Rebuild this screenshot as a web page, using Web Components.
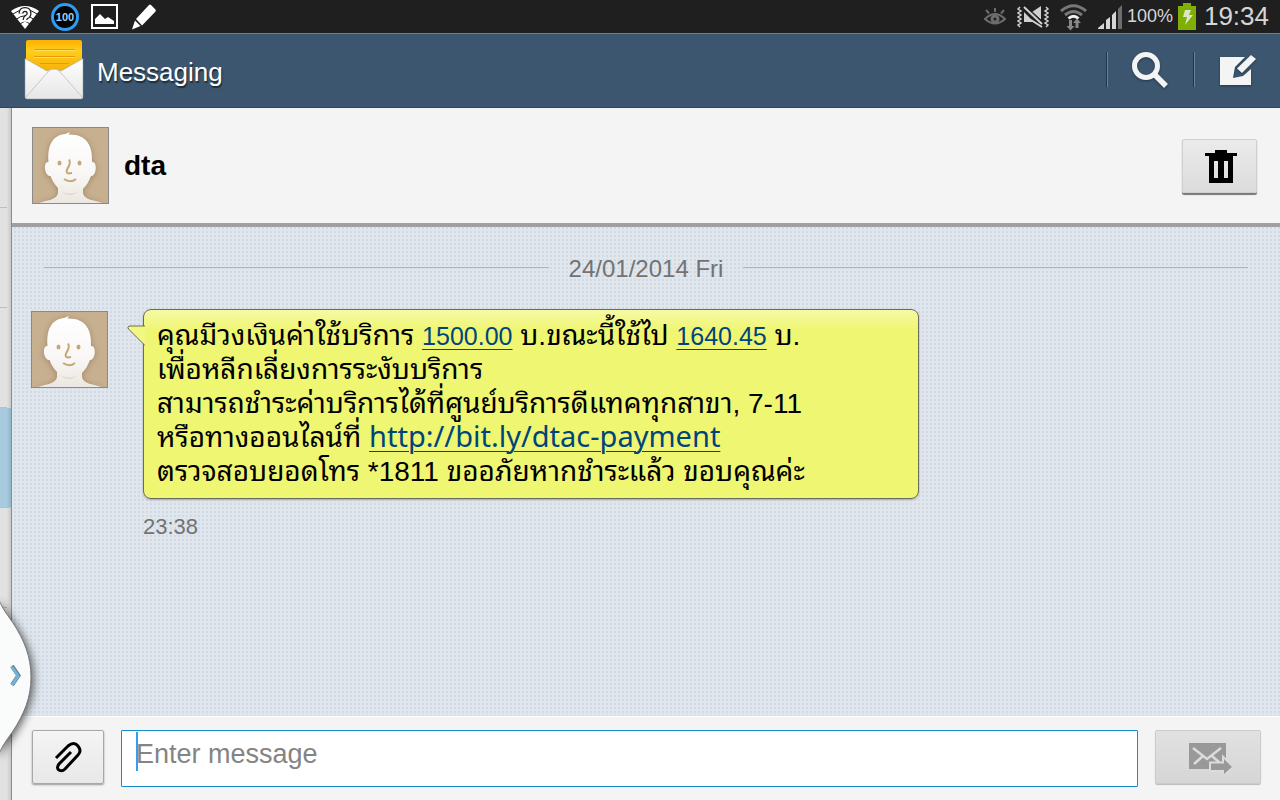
<!DOCTYPE html>
<html lang="th">
<head>
<meta charset="utf-8">
<meta name="viewport" content="width=device-width, initial-scale=1">
<title>Messaging</title>
<style>
    html, body { height: 100%; margin: 0; }
    body {
        display: flex;
        flex-direction: column;
        overflow: hidden;
        background: #f4f4f4;
        color: #000;
        font-family: "Liberation Sans", "Droid Sans Thai", "Noto Sans Thai Looped", Loma, Waree, "Noto Sans Thai", "Noto Sans", sans-serif;
    }
    main {
        position: relative;
        flex: 1;
        display: flex;
        min-height: 0;
    }
    .pane {
        flex: 1;
        display: flex;
        flex-direction: column;
        min-width: 0;
    }
</style>
</head>
<body>
<status-bar time="19:34" battery="100%" badge="100"></status-bar>
<action-bar>Messaging</action-bar>
<main>
    <thread-rail></thread-rail>
    <div class="pane">
        <contact-header>dta</contact-header>
        <message-list>
            <date-divider>24/01/2014 Fri</date-divider>
            <message-bubble time="23:38">คุณมีวงเงินค่าใช้บริการ <a class="amount" href="#1500.00">1500.00</a> บ.ขณะนี้ใช้ไป <a class="amount" href="#1640.45">1640.45</a> บ.<br>เพื่อหลีกเลี่ยงการระงับบริการ<br>สามารถชำระค่าบริการได้ที่ศูนย์บริการดีแทคทุกสาขา, 7-11<br>หรือทางออนไลน์ที่ <a class="url" href="http://bit.ly/dtac-payment">http://bit.ly/dtac-payment</a><br>ตรวจสอบยอดโทร *1811 ขออภัยหากชำระแล้ว ขอบคุณค่ะ</message-bubble>
        </message-list>
        <message-composer></message-composer>
    </div>
    <drawer-handle></drawer-handle>
</main>

<script>
// small helper, every element fills its shadow root from a template
function attach(element, html) {
    const template = document.createElement('template');
    template.innerHTML = html;
    element.attachShadow({ mode: 'open' });
    element.shadowRoot.appendChild(template.content.cloneNode(true));
}


// notifications on the left, device state on the right
class StatusBar extends HTMLElement {
    constructor() {
        super();
        attach(this, `
            <style>
                :host {
                    display: flex;
                    justify-content: space-between;
                    align-items: center;
                    height: 33px;
                    padding: 0 11px;
                    background: #1f1f1f;
                    color: #d6d6d6;
                }
                .group { display: flex; align-items: center; }
                .left { gap: 12px; }
                .badge {
                    box-sizing: border-box;
                    width: 28px;
                    height: 28px;
                    border: 3px solid #2f9cf4;
                    border-radius: 50%;
                    background: #050505;
                    color: #9ccdf5;
                    font-size: 11px;
                    font-weight: bold;
                    line-height: 22px;
                    text-align: center;
                }
                .right { gap: 5px; }
                .states { display: flex; align-items: center; gap: 11px; }
                .battery { font-size: 18px; }
                .time { padding-left: 3px; font-size: 26px; }
                svg { display: block; }
            </style>
            <div class="group left">
                <svg width="28" height="24" viewBox="0 0 28 24">
                    <path d="M0 6Q14-4 28 6L14 24z" fill="#fff"/>
                    <path d="M1 9.500Q14 0 27 9.500M5 14.500Q14 7 23 14.500M9 19Q14 15 19 19" fill="none" stroke="#1f1f1f"/>
                    <path d="M10 8.500q0-4 4-4t4 4q0 2.500-2.500 3.500-1.500 1-1.500 3" fill="none" stroke="#1f1f1f" stroke-width="5"/>
                    <path d="M10 8.500q0-4 4-4t4 4q0 2.500-2.500 3.500-1.500 1-1.500 3" fill="none" stroke="#fff" stroke-width="2.500"/>
                    <path d="M12.500 16.500h3v2.500h-3z" fill="#fff"/>
                </svg>
                <span class="badge"></span>
                <svg width="27" height="25" viewBox="0 0 27 25">
                    <path d="M1 1h25v23H1z" fill="none" stroke="#fff" stroke-width="2"/>
                    <path d="M4 20v-5l5-5 5 5 3-2 6 4v3z" fill="#fff"/>
                </svg>
                <svg width="28" height="26" viewBox="0 0 28 26">
                    <path d="M21 1l4.500 4.500q.5 1 0 2L12 21.500 6 15 19 1q1-1 2 0zM5 16.500L10.500 22 2 25.500z" fill="#fff"/>
                </svg>
            </div>
            <div class="group right">
                <div class="states">
                    <svg width="22" height="18" viewBox="0 0 22 18" fill="none" stroke="#6d6d6d">
                        <path d="M1 11Q11 1 21 11 11 20 1 11z" stroke-width="2"/>
                        <circle cx="11" cy="11" r="3" stroke-width="3"/>
                        <path d="M11 0v4M2 2l3 3.500M20 2l-3 3.500" stroke-width="2"/>
                    </svg>
                    <svg width="32" height="22" viewBox="0 0 32 22">
                        <path d="M3 1l-2 2 3 2-3 2 3 2-3 2 3 2-3 2 3 2-3 2 2 2M29 1l2 2-3 2 3 2-3 2 3 2-3 2 3 2-3 2 3 2-2 2" fill="none" stroke="#d0d0d0" stroke-width="1.500"/>
                        <path d="M7 6l10 10H7zM15 6l9-6v14z" fill="#d0d0d0"/>
                        <path d="M7 1l18 17M14 14l11 7" stroke="#d0d0d0" stroke-width="2"/>
                        <path d="M9 0l17 16" stroke="#1f1f1f"/>
                    </svg>
                    <svg width="27" height="28" viewBox="0 0 27 28">
                        <g fill="none" stroke="#777" stroke-width="3">
                            <path d="M1 8Q13.500-2.500 26 8"/>
                            <path d="M5 12Q13.500 5 22 12"/>
                        </g>
                        <path d="M8.500 15.500Q13.500 11 18.500 15.500" fill="none" stroke="#eee" stroke-width="3"/>
                        <path d="M9 17h3v6h2.500L10.500 27.500 6.500 23H9zM15.500 25v-5H13l4-4.500 4 4.500h-2.500v5z" fill="#888"/>
                    </svg>
                    <svg width="24" height="24" viewBox="0 0 24 24">
                        <path d="M0 24v-1l6-5v6zM8 24v-9l4-3v12zM14 24V10l4-4v18z" fill="#d6d6d6"/>
                        <path d="M20 24V4l4-4v24z" fill="#6d6d6d"/>
                    </svg>
                </div>
                <span class="battery"></span>
                <svg width="18" height="27" viewBox="0 0 18 27">
                    <path d="M0 3h5V0h8v3h5v24H0z" fill="#7fae04"/>
                    <path d="M7 7h6l-2 5h4L7 22l2-8H5z" fill="#dbe6c4"/>
                </svg>
                <span class="time"></span>
            </div>
        `);
    }

    connectedCallback() {
        this.shadowRoot.querySelector('.badge').textContent = this.getAttribute('badge');
        this.shadowRoot.querySelector('.battery').textContent = this.getAttribute('battery');
        this.shadowRoot.querySelector('.time').textContent = this.getAttribute('time');
    }
}


// app icon, title and the two actions
class ActionBar extends HTMLElement {
    constructor() {
        super();
        attach(this, `
            <style>
                :host {
                    box-sizing: border-box;
                    display: flex;
                    align-items: center;
                    height: 75px;
                    padding: 0 0 2px 22px;
                    border-top: 1px solid #66829c;
                    border-bottom: 1px solid #2c475f;
                    background: #3b566e;
                    color: #fff;
                }
                h1 {
                    flex: 1;
                    margin: 0;
                    padding: 6px 0 0 11px;
                    font-size: 26px;
                    font-weight: normal;
                    text-shadow: 1px 2px 1px #1c2c3b;
                }
                button {
                    width: 87px;
                    height: 35px;
                    padding: 0;
                    border: 0;
                    border-left: 1px solid #1f3549;
                    box-shadow: inset 1px 0 #6a8197;
                    background: none;
                    cursor: pointer;
                }
                svg { display: block; margin: auto; overflow: visible; }
                button svg { filter: drop-shadow(0 1px 1px #22374a); }
            </style>
            <svg width="64" height="62" viewBox="0 0 64 62">
                <defs>
                    <linearGradient id="paper" x2="0" y2="1"><stop stop-color="#ffb000"/><stop offset=".3" stop-color="#ffce1c"/><stop offset="1" stop-color="#f6a800"/></linearGradient>
                    <linearGradient id="flap" x2="0" y2="1"><stop stop-color="#fff"/><stop offset="1" stop-color="#e6e6e6"/></linearGradient>
                </defs>
                <path d="M4 3q0-2 2-2h52q2 0 2 2v34H4z" fill="url(#paper)"/>
                <path d="M12 10.500h41M12 17.500h41M18 24.500h29" stroke="#e99a00"/>
                <path d="M12 11.500h41M12 18.500h41" stroke="#ffe060"/>
                <path d="M3 19.500L25 32q7-4 14 0l22-12.500V58q0 2-2 2H5q-2 0-2-2z" fill="url(#flap)" stroke="#8d9aa6" stroke-width=".5"/>
                <path d="M4 58L25 34q7-8 14 0l21 24" fill="none" stroke="#c9c9c9"/>
            </svg>
            <h1><slot></slot></h1>
            <button aria-label="Search">
                <svg width="36" height="36" viewBox="0 0 36 36" fill="none" stroke="#f4f4f4">
                    <circle cx="14" cy="14" r="11.500" stroke-width="5"/>
                    <path d="M22 22l12 12" stroke-width="5.500"/>
                </svg>
            </button>
            <button aria-label="New message">
                <svg width="36" height="32" viewBox="0 0 36 32" fill="#f4f4f4">
                    <path d="M1 3h25L16 13l-2 11 10-2 8-7v16H1z"/>
                    <path d="M32 1l5 4-14 14-5-4.500z"/>
                </svg>
            </button>
        `);
    }
}


// the sliver of the thread list left of the conversation
class ThreadRail extends HTMLElement {
    constructor() {
        super();
        attach(this, `
            <style>
                :host {
                    box-sizing: border-box;
                    width: 12px;
                    overflow: hidden;
                    border-right: 1px solid #8c8c8c;
                    background: linear-gradient(90deg, #e2e2e2 60%, #c8c8c8);
                }
                i {
                    display: block;
                    height: 99px;
                    border-bottom: 1px solid #bdbdbd;
                    margin-right: 4px;
                }
                .selected {
                    margin-right: 0;
                    background: linear-gradient(90deg, #a9cbde 60%, #8fb5ca);
                }
            </style>
            <i></i><i></i><i></i><i class="selected"></i><i></i><i></i>
        `);
    }
}


class ContactAvatar extends HTMLElement {
    constructor() {
        super();
        attach(this, `
            <style>
                :host {
                    box-sizing: border-box;
                    display: block;
                    flex: none;
                    width: 77px;
                    height: 77px;
                    border: 1px solid #8a8a8a;
                    background: #c7b090;
                }
                svg { display: block; width: 100%; height: 100%; }
                .head { filter: drop-shadow(0 1px 3px #85694699); }
            </style>
            <svg viewBox="1 1 75 75" role="img" aria-label="Contact photo">
                <defs><linearGradient id="skin" x2="0" y2="1"><stop stop-color="#fff"/><stop offset=".6" stop-color="#f8f7f5"/><stop offset="1" stop-color="#ebe6df"/></linearGradient></defs>
                <path class="head" d="M4 77C15 73 25 73 26 66V61C22 57 20 53 18.500 49 12 49 11 34 16.500 35 15 15 23 8 33 7L38 5 36.500 7.500C54 7 61 18 60 35 65.500 34 65 49 59 49 57 54 55 58 51 62V66C52 73 62 73 74 77z" fill="url(#skin)"/>
                <path d="M29 64Q38 69 47 64 38 72 29 64z" fill="#e0d9ce"/>
                <g fill="#c3a878"><ellipse cx="27.500" cy="36" rx="2" ry="2.500"/><ellipse cx="47.500" cy="36" rx="2" ry="2.500"/></g>
                <path d="M37 32.500Q39 36 36 40.500 33 46 36.500 46.500L40 46M32 52Q38.500 56.500 44 52" fill="none" stroke="#c3a878" stroke-width="2"/>
            </svg>
        `);
    }
}


class ContactHeader extends HTMLElement {
    constructor() {
        super();
        attach(this, `
            <style>
                :host {
                    box-sizing: border-box;
                    display: flex;
                    align-items: center;
                    gap: 15px;
                    height: 119px;
                    padding: 0 23px 0 20px;
                    border-bottom: 4px solid #a0a0a0;
                    background: #f4f4f4;
                }
                h2 {
                    flex: 1;
                    margin: 0;
                    font-size: 28px;
                    font-weight: bold;
                }
                button {
                    width: 75px;
                    height: 54px;
                    padding: 2px 0 0 2px;
                    border: 1px solid #d0d0d0;
                    border-radius: 2px;
                    background: linear-gradient(#ebebeb, #dcdcdc);
                    box-shadow: 0 2px 1px #777;
                    cursor: pointer;
                }
                svg { display: block; margin: auto; }
            </style>
            <contact-avatar></contact-avatar>
            <h2><slot></slot></h2>
            <button aria-label="Delete">
                <svg width="32" height="33" viewBox="0 0 32 33">
                    <path d="M10 0h12v3h10v3h-4v27H4V6H0V3h10zM9 11v17h4V11zm10 0v17h4V11z" fill="#000" fill-rule="evenodd"/>
                </svg>
            </button>
        `);
    }
}


// dotted canvas that holds the conversation
class MessageList extends HTMLElement {
    constructor() {
        super();
        attach(this, `
            <style>
                :host {
                    flex: 1;
                    display: block;
                    min-height: 0;
                    padding: 28px 32px 0 19px;
                    overflow: hidden;
                    background: conic-gradient(#cedbe6 25%, #e1e6ec 0) 0 0 / 4px 4px;
                }
            </style>
            <slot></slot>
        `);
    }
}


class DateDivider extends HTMLElement {
    constructor() {
        super();
        attach(this, `
            <style>
                :host {
                    display: flex;
                    align-items: center;
                    gap: 20px;
                    padding-left: 13px;
                    color: #737373;
                    font-size: 24px;
                    line-height: 28px;
                }
                :host::before, :host::after {
                    content: "";
                    flex: 1;
                    height: 1px;
                    margin-bottom: 3px;
                    background: #acb4bb;
                }
            </style>
            <slot></slot>
        `);
    }
}


// received message: avatar, balloon and the time under it
class MessageBubble extends HTMLElement {
    constructor() {
        super();
        attach(this, `
            <style>
                :host {
                    display: flex;
                    align-items: flex-start;
                    gap: 35px;
                    padding-top: 26px;
                }
                contact-avatar { margin-top: 2px; }
                .column { flex: 0 1 776px; min-width: 0; }
                .balloon {
                    position: relative;
                    padding: 9px 13px;
                    border: 1px solid #6c6c5c;
                    border-radius: 8px;
                    background: linear-gradient(#f6faa6, #eff672 20px);
                    box-shadow: 0 1px 2px #7778;
                    font-size: 28px;
                    line-height: 34px;
                }
                .tail { position: absolute; left: -17px; top: 15px; }
                ::slotted(a) {
                    color: #00447c;
                    line-height: 24px;
                    text-decoration-thickness: 1px;
                    text-underline-offset: 4px;
                }
                ::slotted(.amount) { font-size: 25px; }
                ::slotted(.url) { font-family: "Noto Sans", sans-serif; font-size: 29px; }
                time {
                    display: block;
                    padding-top: 14px;
                    color: #737373;
                    font-size: 22px;
                    line-height: 28px;
                }
            </style>
            <contact-avatar></contact-avatar>
            <div class="column">
                <div class="balloon">
                    <svg class="tail" width="18" height="22" viewBox="0 0 18 22">
                        <path d="M18 1H2Q0 2 1.500 4L18 20.500" fill="#f1f780" stroke="#6c6c5c"/>
                    </svg>
                    <slot></slot>
                </div>
                <time></time>
            </div>
        `);
    }

    connectedCallback() {
        this.shadowRoot.querySelector('time').textContent = this.getAttribute('time');
    }
}


class MessageComposer extends HTMLElement {
    constructor() {
        super();
        attach(this, `
            <style>
                :host {
                    box-sizing: border-box;
                    display: flex;
                    align-items: flex-start;
                    gap: 17px;
                    height: 84px;
                    padding: 13px 19px 0 20px;
                    border-top: 1px solid #fff;
                    background: #f4f4f4;
                }
                button {
                    flex: none;
                    width: 72px;
                    height: 54px;
                    margin: 0;
                    padding: 0;
                    border: 1px solid #a8a8a8;
                    border-radius: 2px;
                    background: linear-gradient(#f4f4f4, #e8e8e8);
                    box-shadow: 0 1px 2px #999;
                    cursor: pointer;
                }
                .send {
                    width: 106px;
                    padding: 2px 0 0 4px;
                    border-color: #cbcbcb;
                    background: linear-gradient(#e1e1e1, #d6d6d6);
                    box-shadow: 0 1px 1px #bbb;
                    cursor: default;
                }
                svg { display: block; margin: auto; }
                .field {
                    position: relative;
                    flex: 1;
                    display: flex;
                    min-width: 0;
                }
                textarea {
                    box-sizing: border-box;
                    width: 100%;
                    height: 57px;
                    margin: 0;
                    padding: 6px 14px;
                    overflow: hidden;
                    border: 1px solid #168ccc;
                    border-radius: 1px;
                    outline: 0;
                    background: #fff;
                    font: 27px/34px "Liberation Sans", sans-serif;
                    resize: none;
                }
                textarea::placeholder { color: #848484; }
                .caret {
                    position: absolute;
                    left: 15px;
                    top: 2px;
                    width: 2px;
                    height: 39px;
                    background: #2ba0f5;
                    pointer-events: none;
                }
                .field:focus-within .caret { display: none; }
            </style>
            <button aria-label="Attach">
                <svg width="28" height="32" viewBox="0 0 28 32">
                    <path d="M2 17L14 5q6-5 10 0t0 9L11 28q-3 3-6 1t0-6L17 11" fill="none" stroke="#000" stroke-width="3"/>
                </svg>
            </button>
            <div class="field">
                <textarea rows="1" placeholder="Enter message" aria-label="Enter message"></textarea>
                <span class="caret"></span>
            </div>
            <button class="send" aria-label="Send" disabled>
                <svg width="44" height="32" viewBox="0 0 44 32">
                    <path d="M1 1h37v26H1z" fill="#999"/>
                    <path d="M5 6l14 11L33 6M6 22l9-8M32 21l-8-7" fill="none" stroke="#dcdcdc" stroke-width="2.500"/>
                    <path d="M23 21.500h13V17l8 8-8 7v-4H23z" fill="#999" stroke="#dcdcdc" stroke-width="4" paint-order="stroke"/>
                </svg>
            </button>
        `);
    }
}


// pull tab of the multi window tray
class DrawerHandle extends HTMLElement {
    constructor() {
        super();
        attach(this, `
            <style>
                :host {
                    position: absolute;
                    left: 0;
                    bottom: 36px;
                }
                button { display: block; padding: 0; border: 0; background: none; cursor: pointer; }
                svg { display: block; overflow: visible; }
                .tab { filter: drop-shadow(2px 2px 4px #0009); }
            </style>
            <button aria-label="Open tray">
                <svg width="34" height="174" viewBox="0 0 34 174">
                    <path class="tab" d="M-1 10C3 20 9 27 13 33 24 50 31 66 31 87S24 124 13 141C9 147 3 154-1 164z" fill="#fafcfb" stroke="#777"/>
                    <path d="M12 76l6.500 9.500L12 95" fill="none" stroke="#5f7f90" stroke-width="4"/>
                    <path d="M12 77l6 9L12 95" fill="none" stroke="#73b4d6" stroke-width="3"/>
                </svg>
            </button>
        `);
    }
}


// Define the new elements
customElements.define('contact-avatar', ContactAvatar);
customElements.define('status-bar', StatusBar);
customElements.define('action-bar', ActionBar);
customElements.define('thread-rail', ThreadRail);
customElements.define('contact-header', ContactHeader);
customElements.define('message-list', MessageList);
customElements.define('date-divider', DateDivider);
customElements.define('message-bubble', MessageBubble);
customElements.define('message-composer', MessageComposer);
customElements.define('drawer-handle', DrawerHandle);
</script>
</body>
</html>
